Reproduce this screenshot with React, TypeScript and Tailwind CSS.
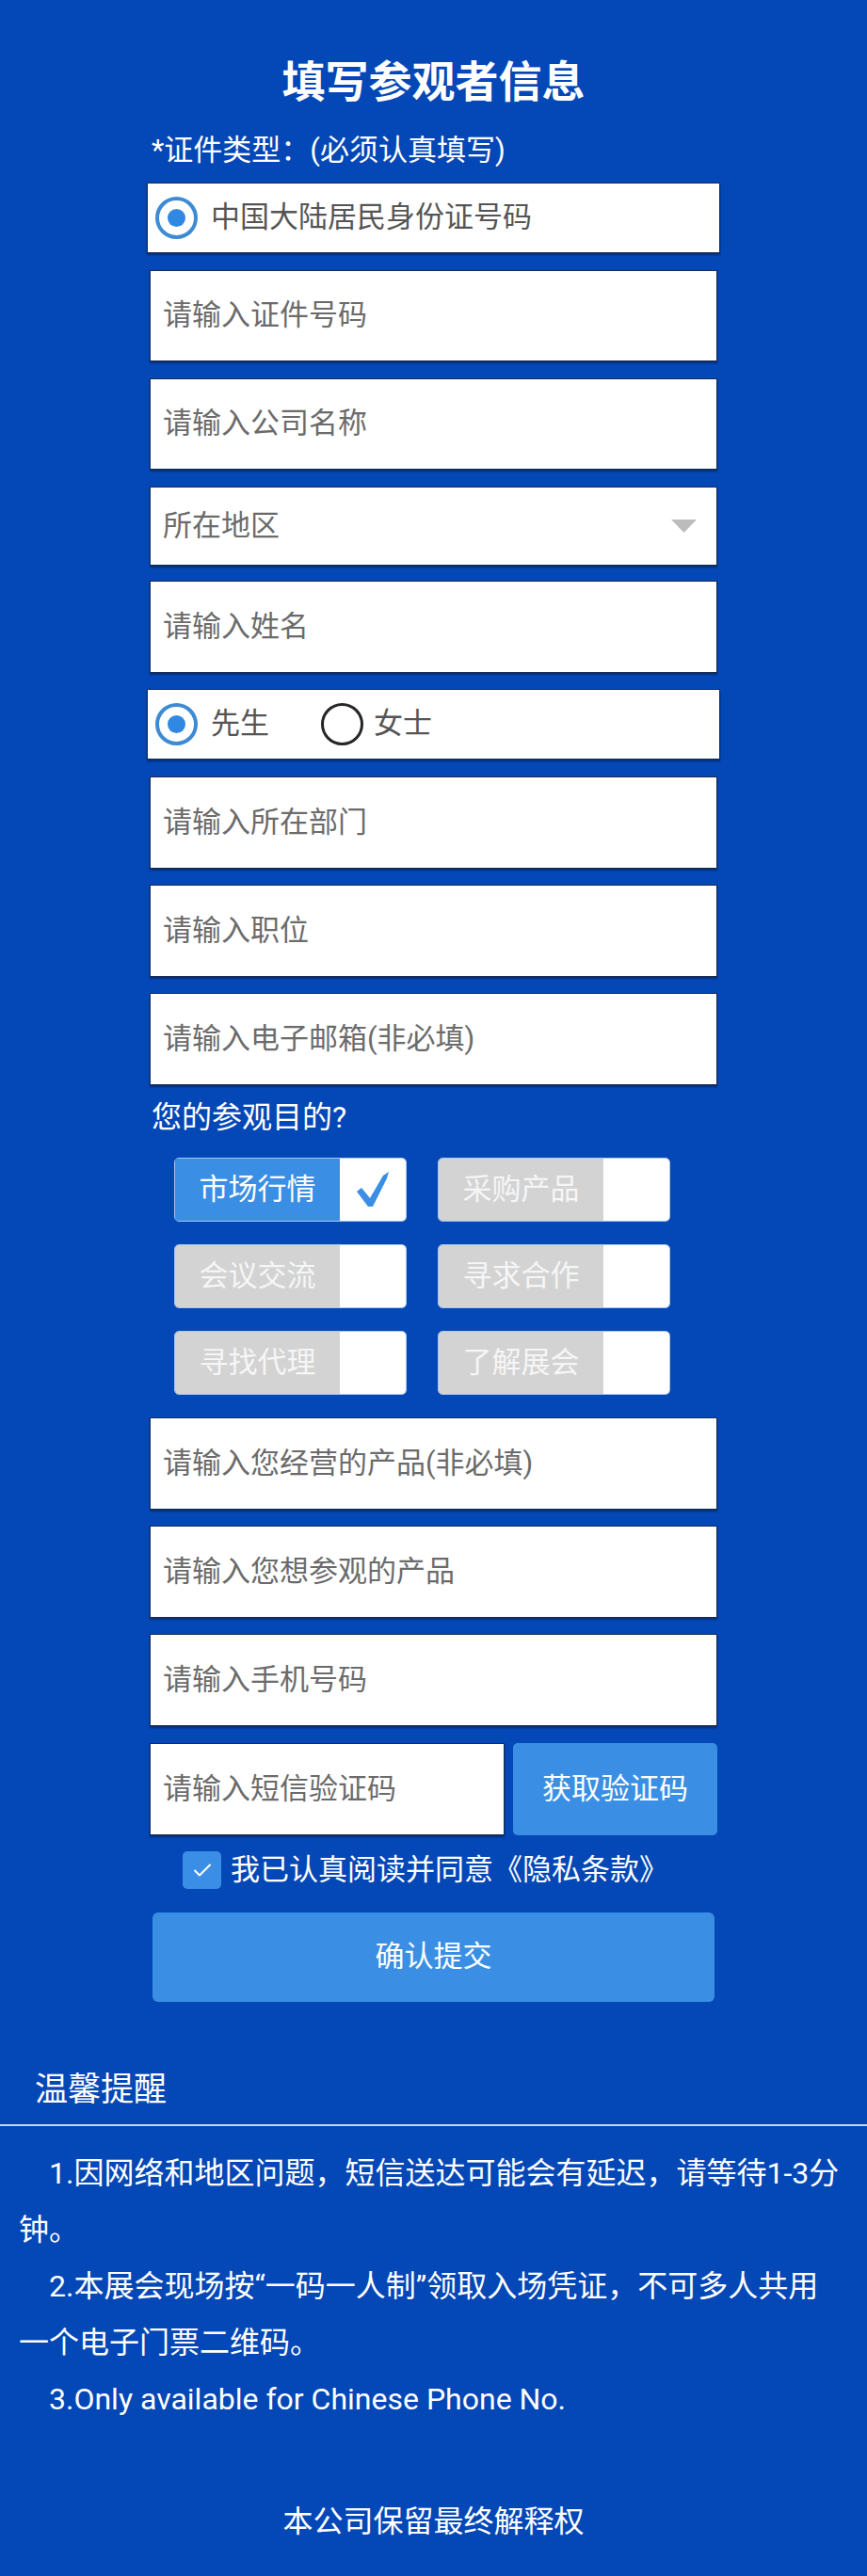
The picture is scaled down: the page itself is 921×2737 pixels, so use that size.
import React from "react";

const BOX =
  "bg-white border border-[#1c2a4c] shadow-[0_2px_2px_rgba(0,0,0,0.35)]";

function Input({ text, h = "h-[98px]", className = "" }: { text: string; h?: string; className?: string }) {
  return (
    <div className={`${BOX} ${h} flex items-center pl-[13px] text-[31px] text-[#6b6b6b] ${className}`}>
      {text}
    </div>
  );
}

function Radio({ checked }: { checked: boolean }) {
  return checked ? (
    <div className="w-[45px] h-[45px] rounded-full border-[4px] border-[#3e8bd4] flex items-center justify-center shrink-0">
      <div className="w-[19px] h-[19px] rounded-full bg-[#2f88e2]" />
    </div>
  ) : (
    <div className="w-[45px] h-[45px] rounded-full border-[3px] border-[#262626] shrink-0" />
  );
}

function Check() {
  return (
    <svg width="36" height="38" viewBox="0 0 36 38">
      <polygon points="1,21 6,17 15,28 29,4 35,0 33,7 18,37 13,37" fill="#3a8ee4" />
    </svg>
  );
}

function Opt({ label, checked = false }: { label: string; checked?: boolean }) {
  return (
    <div className="h-[68px] flex rounded-[5px] overflow-hidden border border-[#a9c5f0]">
      <div
        className={`w-[175px] flex items-center justify-center text-[31px] ${
          checked ? "bg-[#3a8fe4] text-white" : "bg-[#d3d3d3] text-[#f6f6f6]"
        }`}
      >
        {label}
      </div>
      <div className="flex-1 bg-white flex items-center justify-center">{checked && <Check />}</div>
    </div>
  );
}

export default function App() {
  return (
    <div className="w-[921px] min-h-[2737px] bg-[#0447b6] text-white font-['Roboto','Noto_Sans_CJK_SC',sans-serif] flex flex-col pt-[60px] pb-[37px]">
      <h1 className="h-[55px] leading-[55px] text-center text-[46px] font-bold">填写参观者信息</h1>

      <div className="w-[603px] mx-auto flex flex-col">
        <div className="mt-[25px] h-[40px] leading-[40px] text-[31px] pl-[2px]">*证件类型：(必须认真填写)</div>

        <div className={`${BOX} mt-[14px] -mx-[3px] h-[75px] flex items-center pl-[8px] text-[31px] text-[#555]`}>
          <Radio checked />
          <span className="ml-[14px]">中国大陆居民身份证号码</span>
        </div>

        <Input text="请输入证件号码" h="h-[97px]" className="mt-[18px]" />
        <Input text="请输入公司名称" h="h-[97px]" className="mt-[18px]" />

        <div className={`${BOX} mt-[18px] h-[84px] flex items-center justify-between pl-[13px] pr-[21px] text-[31px] text-[#6b6b6b]`}>
          <span>所在地区</span>
          <svg width="27" height="14" viewBox="0 0 27 14">
            <polygon points="0,0 27,0 13.5,14" fill="#bcbcbc" />
          </svg>
        </div>

        <Input text="请输入姓名" className="mt-[16px]" />

        <div className={`${BOX} mt-[17px] -mx-[3px] h-[75px] flex items-center pl-[8px] text-[31px] text-[#555]`}>
          <Radio checked />
          <span className="ml-[14px]">先生</span>
          <div className="ml-[55px]">
            <Radio checked={false} />
          </div>
          <span className="ml-[11px]">女士</span>
        </div>

        <Input text="请输入所在部门" className="mt-[18px]" />
        <Input text="请输入职位" className="mt-[17px]" />
        <Input text="请输入电子邮箱(非必填)" className="mt-[17px]" />

        <div className="mt-[14px] h-[40px] leading-[40px] text-[32px] pl-[2px]">您的参观目的?</div>

        <div className="mt-[23px] ml-[26px] grid grid-cols-[247px_247px] gap-x-[33px] gap-y-[24px]">
          <Opt label="市场行情" checked />
          <Opt label="采购产品" />
          <Opt label="会议交流" />
          <Opt label="寻求合作" />
          <Opt label="寻找代理" />
          <Opt label="了解展会" />
        </div>

        <Input text="请输入您经营的产品(非必填)" className="mt-[24px]" />
        <Input text="请输入您想参观的产品" className="mt-[17px]" />
        <Input text="请输入手机号码" className="mt-[17px]" />

        <div className="mt-[18px] flex gap-[9px] h-[98px]">
          <div className={`${BOX} w-[377px] flex items-center pl-[13px] text-[31px] text-[#6b6b6b]`}>请输入短信验证码</div>
          <div className="flex-1 rounded-[5px] bg-[#3a8fe4] flex items-center justify-center text-[31px] text-white">
            获取验证码
          </div>
        </div>

        <div className="mt-[17px] ml-[35px] flex items-center h-[40px]">
          <div className="w-[41px] h-[40px] rounded-[5px] bg-[#3a8ee6] flex items-center justify-center">
            <svg width="24" height="24" viewBox="0 0 24 24" fill="none" stroke="white" strokeWidth="2" strokeLinecap="round" strokeLinejoin="round">
              <path d="M4 12.5l5 5L20 6.5" />
            </svg>
          </div>
          <span className="ml-[10px] text-[31px]">我已认真阅读并同意《隐私条款》</span>
        </div>

        <div className="mt-[25px] mx-[3px] h-[95px] rounded-[6px] bg-[#3a8fe4] flex items-center justify-center text-[31px] text-white">
          确认提交
        </div>
      </div>

      <div className="mt-[72px] h-[44px] leading-[44px] text-[35px] pl-[37px]">温馨提醒</div>
      <div className="mt-[14px] h-[2px] bg-[#c7d4ef]" />

      <div className="mt-[20px] px-[20px] text-[32px] leading-[60px] whitespace-nowrap">
        <p className="indent-[32px]">
          1.因网络和地区问题，短信送达可能会有延迟，请等待1-3分
          <br />
          钟。
        </p>
        <p className="indent-[32px]">
          2.本展会现场按“一码一人制”领取入场凭证，不可多人共用
          <br />
          一个电子门票二维码。
        </p>
        <p className="indent-[32px]">3.Only available for Chinese Phone No.</p>
      </div>

      <div className="mt-[80px] h-[40px] leading-[40px] text-center text-[32px]">本公司保留最终解释权</div>
    </div>
  );
}
